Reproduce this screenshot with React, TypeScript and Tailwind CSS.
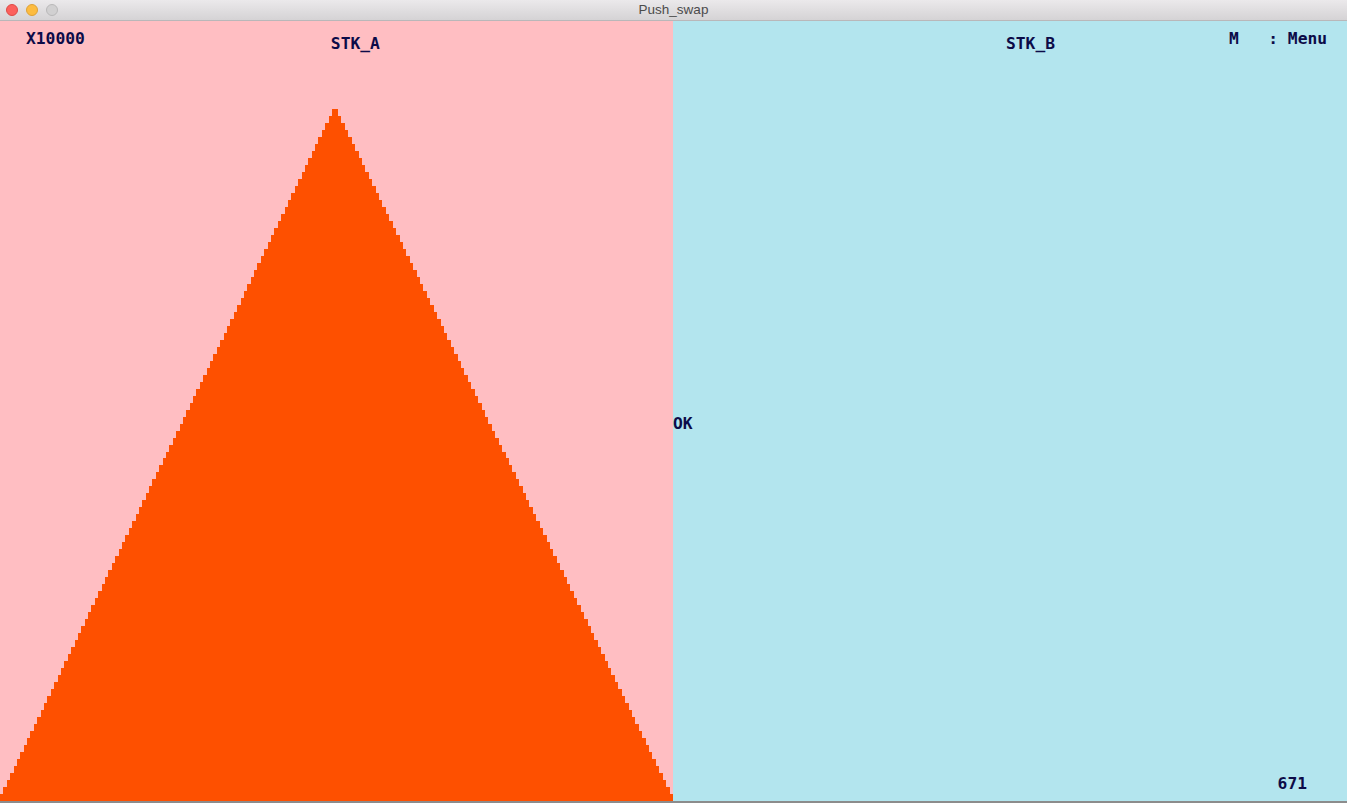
import React from "react";

const ROWS = 99;
const CHART_W = 673;
const CHART_H = 692;

// stepped outline of the centered bars (smallest on top)
const buildPath = () => {
  const left: string[] = [];
  const right: string[] = [];
  for (let i = 0; i < ROWS; i++) {
    const y0 = Math.round((i * CHART_H) / ROWS);
    const y1 = Math.round(((i + 1) * CHART_H) / ROWS);
    const l = Math.round(332 * (1 - i / (ROWS - 1)));
    const r = Math.round(338 + (CHART_W - 338) * (i / (ROWS - 1)));
    left.push(`L${l} ${y0} L${l} ${y1}`);
    right.unshift(`L${r} ${y1} L${r} ${y0}`);
  }
  return `M332 0 ${left.join(" ")} ${right.join(" ")} Z`;
};

const mono = "font-['DejaVu_Sans_Mono','Liberation_Mono',monospace] font-bold text-[16.3px] leading-[16px] text-[#0c0b48] whitespace-pre";

const TitleBar = () => (
  <div className="relative flex items-center justify-center h-[21px] bg-gradient-to-b from-[#ebe9eb] to-[#d5d3d5] border-b border-[#b9b7b9]">
    <div className="absolute left-[6px] top-[4px] flex gap-[8px]">
      <span className="block w-[12px] h-[12px] rounded-full bg-[#fc605c] border border-[#de4a46]" />
      <span className="block w-[12px] h-[12px] rounded-full bg-[#fdbc40] border border-[#dea236]" />
      <span className="block w-[12px] h-[12px] rounded-full bg-[#d1d0d1] border border-[#b9b8b9]" />
    </div>
    <p className="font-['Liberation_Sans',sans-serif] text-[13.5px] text-[#4b4b4b] leading-none">
      Push_swap
    </p>
  </div>
);

export default function App() {
  const d = buildPath();

  return (
    <div className="flex flex-col w-[1347px] h-[803px] overflow-hidden">
      <TitleBar />

      <div className="flex flex-1">
        <div className="flex flex-col w-[673px] bg-[#ffbec2]">
          <div className="flex items-start h-[88px]">
            <p className={`${mono} ml-[26px] mt-[10px]`}>X10000</p>
            <p className={`${mono} ml-[246px] mt-[15px]`}>STK_A</p>
          </div>
          <svg
            width={CHART_W}
            height={CHART_H}
            viewBox={`0 0 ${CHART_W} ${CHART_H}`}
            shapeRendering="crispEdges"
            className="block mt-auto"
          >
            <path d={d} fill="#fe5000" />
          </svg>
        </div>

        <div className="flex flex-col flex-1 bg-[#b3e5ee]">
          <div className="flex items-start h-[31px]">
            <p className={`${mono} ml-[333px] mt-[15px]`}>STK_B</p>
            <p className={`${mono} ml-[174px] mt-[10px]`}>M   : Menu</p>
          </div>
          <p className={`${mono} mt-[364px]`}>OK</p>
          <p className={`${mono} mt-auto mb-[9px] self-end mr-[40px]`}>671</p>
        </div>
      </div>

      <div className="h-[2px] bg-[#8c8c8c]" />
    </div>
  );
}
